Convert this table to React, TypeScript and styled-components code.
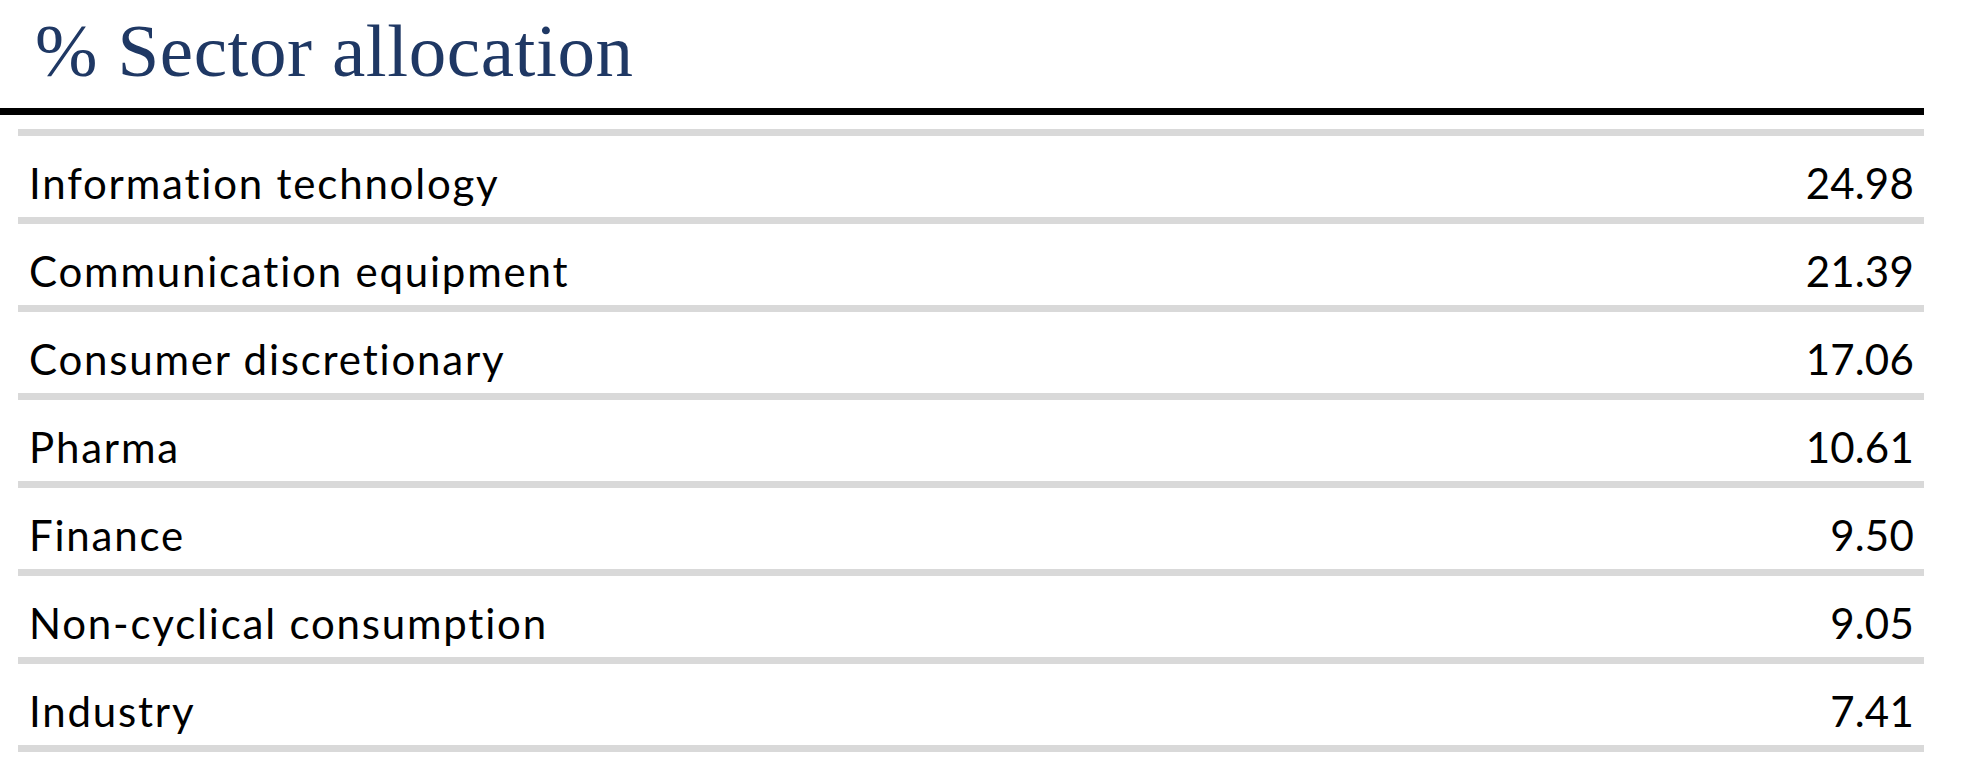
import styled, { createGlobalStyle } from "styled-components";

interface Sector {
    name: string;
    weight: number;
}

const sectors: Sector[] = [
    { name: "Information technology", weight: 24.98 },
    { name: "Communication equipment", weight: 21.39 },
    { name: "Consumer discretionary", weight: 17.06 },
    { name: "Pharma", weight: 10.61 },
    { name: "Finance", weight: 9.5 },
    { name: "Non-cyclical consumption", weight: 9.05 },
    { name: "Industry", weight: 7.41 },
];

const GlobalStyle = createGlobalStyle`
    body {
        margin: 0;
        background: #ffffff;
    }
`;

function App() {
    return (
        <>
            <GlobalStyle />
            <Panel>
                <Header>
                    <Title>% Sector allocation</Title>
                </Header>
                <SectorList>
                    {sectors.map((s) => (
                        <SectorRow key={s.name}>
                            <Label>{s.name}</Label>
                            <Value>{s.weight.toFixed(2)}</Value>
                        </SectorRow>
                    ))}
                </SectorList>
            </Panel>
        </>
    );
}

const Panel = styled.section`
    width: 1924px;
`;

const Header = styled.header`
    padding: 0 0 0 35px;
    border-bottom: 7px solid #000000;
`;

const Title = styled.h1`
    margin: 0;
    font-family: "Liberation Serif", "DejaVu Serif", serif;
    font-weight: 400;
    font-size: 75px;
    line-height: 102px;
    letter-spacing: 0.6px;
    color: #1f3864;
    padding-bottom: 6px;
`;

const SectorList = styled.ul`
    list-style: none;
    margin: 14px 0 0 18px;
    padding: 0;
    border-bottom: 7px solid #d9d9d9;
`;

const SectorRow = styled.li`
    display: flex;
    justify-content: space-between;
    align-items: baseline;
    box-sizing: border-box;
    height: 88px;
    padding: 13px 10px 0 11px;
    border-top: 7px solid #d9d9d9;
    font-family: Lato, "Liberation Sans", sans-serif;
    font-size: 42px;
    line-height: 68px;
    color: #000000;
`;

const Label = styled.span`
    letter-spacing: 1.8px;
`;

const Value = styled.span`
    letter-spacing: 0.2px;
`;

export default App;
